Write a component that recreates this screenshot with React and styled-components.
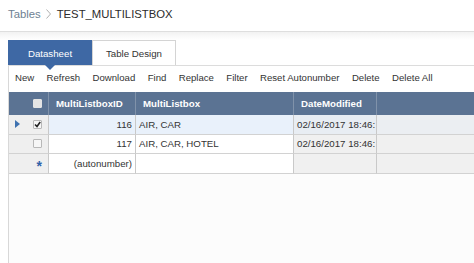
import * as React from 'react'
import styled, { createGlobalStyle } from 'styled-components'

const GlobalStyle = createGlobalStyle`
  html, body {
    margin: 0;
    padding: 0;
    background: #ffffff;
    overflow: hidden;
  }
  body {
    font-family: "Liberation Sans", Arial, sans-serif;
    font-size: 10px;
    color: #333;
  }
`

const Page = styled.div`
  width: 474px;
  height: 263px;
  overflow: hidden;
  display: flex;
  flex-direction: column;
`

const Breadcrumb = styled.div`
  height: 32px;
  display: flex;
  align-items: center;
  padding: 0 8px 3px;
  font-size: 11.3px;
  border-bottom: 1px solid #dedede;
  box-sizing: border-box;
  flex-shrink: 0;
`

const Crumb = styled.span`
  color: ${p => (p.$muted ? '#6e7f92' : '#2b2b2b')};
`

const Chevron = styled.span`
  display: flex;
  margin: 0 6px 0 5px;
`

const Body = styled.div`
  flex: 1;
  display: flex;
  flex-direction: column;
  padding: 8px 0 0 8px;
  background: linear-gradient(#f2f2f2, #ffffff 8px);
`

const Tabs = styled.div`
  display: flex;
  height: 25px;
`

const Tab = styled.div`
  position: relative;
  width: 84px;
  box-sizing: border-box;
  display: flex;
  align-items: center;
  justify-content: center;
  font-size: 9.7px;
  color: ${p => (p.$active ? '#ffffff' : '#333')};
  background: ${p => (p.$active ? '#3e68a4' : '#ffffff')};
  border: 1px solid ${p => (p.$active ? '#3e68a4' : '#d4d4d4')};
  border-bottom: none;

  ${p =>
    p.$active &&
    `
    &::after {
      content: '';
      position: absolute;
      left: 50%;
      bottom: -5px;
      margin-left: -5px;
      border-left: 5px solid transparent;
      border-right: 5px solid transparent;
      border-top: 5px solid #3e68a4;
    }
  `}
`

const Panel = styled.div`
  flex: 1;
  display: flex;
  flex-direction: column;
  border-left: 1px solid #d8d8d8;
  border-top: 1px solid #dcdcdc;
  background: #fcfcfc;
`

const Toolbar = styled.div`
  height: 26px;
  box-sizing: border-box;
  display: flex;
  align-items: center;
  padding: 0 0 3px 6px;
  background: #ffffff;
`

const ToolButton = styled.span`
  color: #333;
  font-size: 9.6px;
  margin-right: 12.4px;
  white-space: nowrap;
`

const Grid = styled.div`
  display: grid;
  grid-template-columns: 40px 87px 158px 83px 120px;
  width: 488px;
`

const HeadCell = styled.div`
  height: 23px;
  box-sizing: border-box;
  display: flex;
  align-items: center;
  justify-content: ${p => (p.$end ? 'flex-end' : 'flex-start')};
  padding: ${p => (p.$end ? '0 6px 0 0' : '0 7px')};
  background: #5b7393;
  color: #ffffff;
  font-weight: bold;
  font-size: 9.7px;
  border-right: 1px solid #8092aa;
  white-space: nowrap;
`

const Cell = styled.div`
  height: 19.5px;
  box-sizing: border-box;
  display: flex;
  align-items: center;
  justify-content: ${p => (p.$right ? 'flex-end' : 'flex-start')};
  padding: 0 3px 0 3px;
  font-size: 9.7px;
  color: #333;
  white-space: nowrap;
  overflow: hidden;
  background: ${p => p.$bg || '#ffffff'};
  border-right: 1px solid #c9c9c9;
  border-bottom: 1px solid #d2d2d2;
`

const SelectorCell = styled(Cell)`
  justify-content: space-between;
  padding: 0 6px 0 6px;
  background: #efefef;
`

const Arrow = styled.span`
  width: 0;
  height: 0;
  border-top: 4px solid transparent;
  border-bottom: 4px solid transparent;
  border-left: 5px solid ${p => (p.$show ? '#3f72b0' : 'transparent')};
`

const Box = styled.span`
  width: 9px;
  height: 9px;
  box-sizing: border-box;
  border: 1px solid ${p => (p.$header ? '#e4e4e4' : '#b8b8b8')};
  background: ${p => (p.$header ? '#e4e4e4' : '#f6f6f6')};
  border-radius: 1px;
  display: flex;
  align-items: center;
  justify-content: center;
`

const Star = styled.span`
  color: #2f62a8;
  font-size: 14px;
  font-weight: bold;
  line-height: 1;
  margin-top: 5px;
`

const Check = () => (
  <svg width="7" height="7" viewBox="0 0 7 7">
    <path d="M1 3.5 L3 5.5 L6.2 1" fill="none" stroke="#222" strokeWidth="1.6" />
  </svg>
)

const ChevronIcon = () => (
  <svg width="5" height="10" viewBox="0 0 5 10">
    <path d="M0.5 0.5 L4.5 5 L0.5 9.5" fill="none" stroke="#b0b0b0" strokeWidth="1" />
  </svg>
)

const rows = [
  { id: 116, list: 'AIR, CAR', date: '02/16/2017 18:46:', selected: true, checked: true },
  { id: 117, list: 'AIR, CAR, HOTEL', date: '02/16/2017 18:46:', selected: false, checked: false },
]

export default function App() {
  return (
    <Page>
      <GlobalStyle />
      <Breadcrumb>
        <Crumb $muted>Tables</Crumb>
        <Chevron>
          <ChevronIcon />
        </Chevron>
        <Crumb>TEST_MULTILISTBOX</Crumb>
      </Breadcrumb>
      <Body>
        <Tabs>
          <Tab $active>Datasheet</Tab>
          <Tab>Table Design</Tab>
        </Tabs>
        <Panel>
          <Toolbar>
            <ToolButton>New</ToolButton>
            <ToolButton>Refresh</ToolButton>
            <ToolButton>Download</ToolButton>
            <ToolButton>Find</ToolButton>
            <ToolButton>Replace</ToolButton>
            <ToolButton>Filter</ToolButton>
            <ToolButton>Reset Autonumber</ToolButton>
            <ToolButton>Delete</ToolButton>
            <ToolButton>Delete All</ToolButton>
          </Toolbar>
          <Grid>
            <HeadCell $end>
              <Box $header />
            </HeadCell>
            <HeadCell>MultiListboxID</HeadCell>
            <HeadCell>MultiListbox</HeadCell>
            <HeadCell>DateModified</HeadCell>
            <HeadCell />
            {rows.map(r => (
              <React.Fragment key={r.id}>
                <SelectorCell>
                  <Arrow $show={r.selected} />
                  <Box>{r.checked && <Check />}</Box>
                </SelectorCell>
                <Cell $right $bg={r.selected ? '#e9f1fb' : '#ffffff'}>{r.id}</Cell>
                <Cell $bg={r.selected ? '#e9f1fb' : '#ffffff'}>{r.list}</Cell>
                <Cell $bg={r.selected ? '#e8edf3' : '#f0f0f0'}>{r.date}</Cell>
                <Cell $bg={r.selected ? '#ebeef2' : '#f0f0f0'} />
              </React.Fragment>
            ))}
            <SelectorCell>
              <Arrow />
              <Star>*</Star>
            </SelectorCell>
            <Cell $right>(autonumber)</Cell>
            <Cell />
            <Cell $bg="#f0f0f0" />
            <Cell $bg="#f0f0f0" />
          </Grid>
        </Panel>
      </Body>
    </Page>
  )
}
